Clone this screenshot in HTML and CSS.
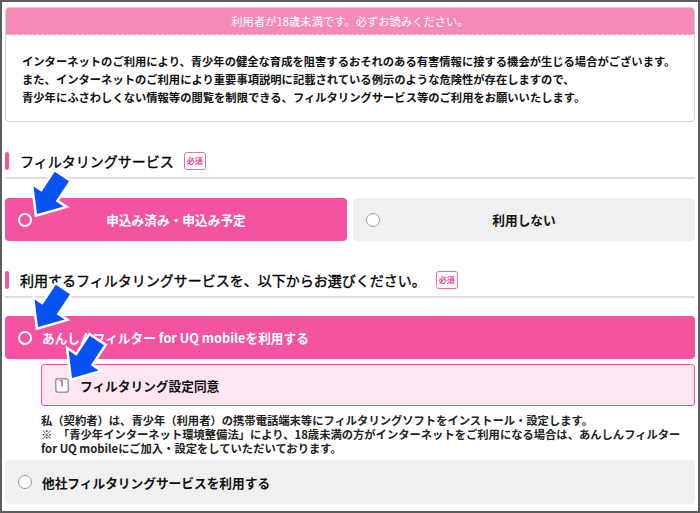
FILE: index.html
```html
<!DOCTYPE html>
<html lang="ja">
  <head>
    <meta charset="UTF-8" />
    <meta name="viewport" content="width=device-width, initial-scale=1.0" />
    <title>フィルタリングサービス</title>

    <link rel="stylesheet" href="styles.css">
  </head>
  <body>
    <div class="frame">
      <div class="notice">
        <div class="notice-header">利用者が18歳未満です。必ずお読みください。</div>
        <div class="notice-body">
          <p>インターネットのご利用により、青少年の健全な育成を阻害するおそれのある有害情報に接する機会が生じる場合がございます。</p>
          <p>また、インターネットのご利用により重要事項説明に記載されている例示のような危険性が存在しますので、</p>
          <p>青少年にふさわしくない情報等の閲覧を制限できる、フィルタリングサービス等のご利用をお願いいたします。</p>
        </div>
      </div>

      <div class="section-title">
        <span class="section-bar"></span>
        <span class="section-text">フィルタリングサービス</span>
        <span class="badge">必須</span>
      </div>

      <div class="choice-row">
        <div class="choice choice-half is-active">
          <span class="radio"></span>
          <span class="choice-label">申込み済み・申込み予定</span>
        </div>
        <div class="choice choice-half">
          <span class="radio"></span>
          <span class="choice-label">利用しない</span>
        </div>
      </div>

      <div class="section-title">
        <span class="section-bar"></span>
        <span class="section-text">利用するフィルタリングサービスを、以下からお選びください。</span>
        <span class="badge">必須</span>
      </div>

      <div class="choice choice-full is-active">
        <span class="radio"></span>
        <span class="choice-label">あんしんフィルター for UQ mobileを利用する</span>
      </div>

      <div class="agree">
        <svg class="checkbox" width="14" height="15" viewBox="0 0 14 15">
          <rect x="0.75" y="0.75" width="12.5" height="13.5" rx="2.5" fill="#fff" stroke="#9a9a9a" stroke-width="1.5"/>
          <path d="M4.5 2.5 H7 V8.5" fill="none" stroke="#f0509f" stroke-width="1.6"/>
        </svg>
        <span class="agree-label">フィルタリング設定同意</span>
      </div>

      <p class="note">私（契約者）は、青少年（利用者）の携帯電話端末等にフィルタリングソフトをインストール・設定します。<br>※　「青少年インターネット環境整備法」により、18歳未満の方がインターネットをご利用になる場合は、あんしんフィルター<br>for UQ mobileにご加入・設定をしていただいております。</p>

      <div class="choice choice-full">
        <span class="radio"></span>
        <span class="choice-label">他社フィルタリングサービスを利用する</span>
      </div>

      <!-- pointer arrows -->
      <svg class="arrow arrow-1" width="44" height="54" viewBox="-3 -3 44 54">
        <polygon points="5,45 31.6,37.4 23.7,32.2 37,12.2 22.8,2.8 9.5,22.8 1.6,17.5" />
      </svg>
      <svg class="arrow arrow-2" width="44" height="54" viewBox="-3 -3 44 54">
        <polygon points="5,45 31.6,37.4 23.7,32.2 37,12.2 22.8,2.8 9.5,22.8 1.6,17.5" />
      </svg>
      <svg class="arrow arrow-3" width="44" height="54" viewBox="-3 -3 44 54">
        <polygon points="5,45 31.6,37.4 23.7,32.2 37,12.2 22.8,2.8 9.5,22.8 1.6,17.5" />
      </svg>
    </div>
  </body>
</html>
```

FILE: styles.css
```css
body {
  margin: 0;
  font-family: "Noto Sans CJK JP", "Noto Sans", sans-serif;
  color: #111;
}

p {
  margin: 0;
}

.frame {
  position: relative;
  width: 700px;
  height: 513px;
  box-sizing: border-box;
  border: 2px solid #5c5c5c;
  padding: 5px 3px 0 3px;
  overflow: hidden;
  background-color: #fff;
}

.notice {
  border: 1px solid #d2d2d2;
  border-radius: 4px;
  overflow: hidden;
}

.notice-header {
  height: 26px;
  line-height: 26px;
  background-color: #f48ab7;
  border-bottom: 1px dashed #f9b8d4;
  color: #fff;
  font-size: 11.3px;
  text-align: center;
}

.notice-body {
  padding: 17px 16px 15px;
  font-size: 11.3px;
  font-weight: bold;
  line-height: 18px;
  white-space: nowrap;
}

.section-title {
  display: flex;
  align-items: center;
  height: 20px;
  margin-top: 29px;
  padding-bottom: 6px;
  border-bottom: 2px solid #dddddd;
}

.section-bar {
  width: 4px;
  height: 18px;
  border-radius: 2px;
  background-color: #f352a1;
  margin-right: 11px;
}

.section-text {
  font-size: 14px;
  line-height: 20px;
  color: #000;
  -webkit-text-stroke: 0.35px #000;
}

.badge {
  margin-left: 10px;
  width: 22px;
  height: 18px;
  box-sizing: border-box;
  border: 1.5px solid #f26aa6;
  border-radius: 3px;
  color: #e8418f;
  font-size: 8px;
  font-weight: bold;
  line-height: 15px;
  text-align: center;
}

.choice-row {
  display: flex;
  gap: 6px;
  margin-top: 19px;
}

.choice {
  display: flex;
  align-items: center;
  height: 43px;
  box-sizing: border-box;
  border-radius: 4px;
  background-color: #f0f0f0;
  font-size: 12.7px;
  font-weight: bold;
}

.choice.is-active {
  background-color: #f353a1;
  color: #fff;
}

.choice-half {
  flex: 1;
  padding: 0 27px 0 13px;
}

.choice-half .choice-label {
  flex: 1;
  text-align: center;
}

.choice-full {
  padding-left: 13px;
  gap: 10px;
}

.choice-full.is-active {
  margin-top: 18px;
}

.choice-full:last-of-type {
  height: 44px;
  margin-top: 5px;
}

.radio {
  width: 14px;
  height: 14px;
  box-sizing: border-box;
  border-radius: 50%;
  border: 1.5px solid #9a9a9a;
  background-color: #fff;
}

.is-active .radio {
  border: 2.5px solid #fff;
  background-color: transparent;
}

.agree {
  display: flex;
  align-items: center;
  gap: 11px;
  height: 42px;
  box-sizing: border-box;
  margin: 5px 0 0 36px;
  padding-left: 13px;
  border: 1.5px solid #f0569f;
  border-radius: 3px;
  background-color: #fde5f2;
}

.agree-label {
  font-size: 12.7px;
  font-weight: bold;
}

.note {
  margin: 7px 0 0 36px;
  font-size: 11.3px;
  font-weight: bold;
  line-height: 14px;
  color: #222;
  white-space: nowrap;
}

.arrow {
  position: absolute;
}

.arrow polygon {
  fill: #0652f2;
  stroke: #fff;
  stroke-width: 5;
  stroke-linejoin: miter;
  paint-order: stroke;
}

.arrow-1 {
  left: 27px;
  top: 164px;
}

.arrow-2 {
  left: 28px;
  top: 277px;
}

.arrow-3 {
  left: 62px;
  top: 328px;
}
```
